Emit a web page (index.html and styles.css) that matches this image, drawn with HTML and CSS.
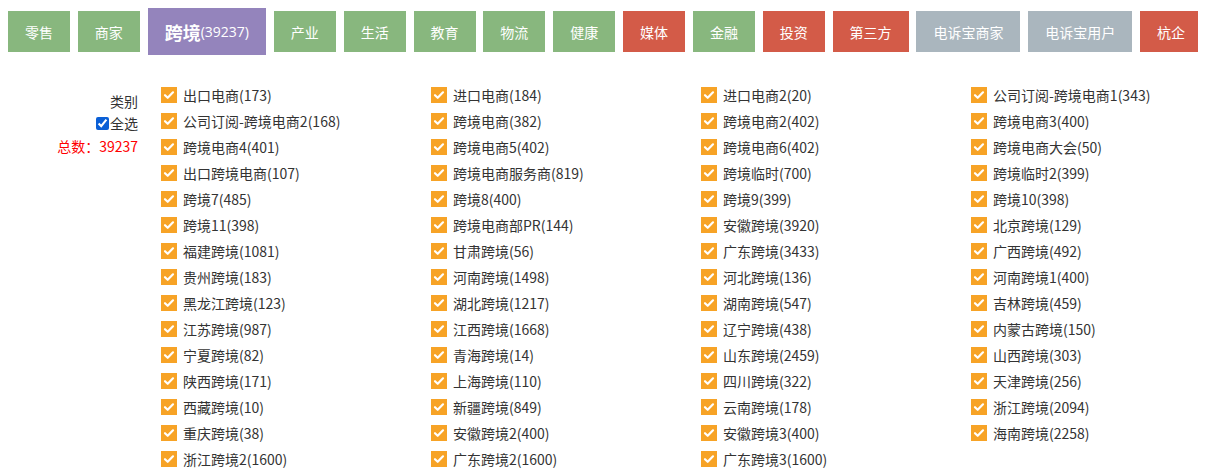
FILE: index.html
```html
<!DOCTYPE html>
<html lang="zh-CN">
<head>
    <meta charset="UTF-8">
    <meta name="viewport" content="width=device-width, initial-scale=1.0">
    <title>跨境 - 类别</title>
    <link rel="stylesheet" href="styles.css">
</head>
<body>
    <nav class="tabs">
        <a class="tab green" href="#">零售</a>
        <a class="tab green" href="#">商家</a>
        <a class="tab active" href="#"><b>跨境</b><span class="count">(39237)</span></a>
        <a class="tab green" href="#">产业</a>
        <a class="tab green" href="#">生活</a>
        <a class="tab green" href="#">教育</a>
        <a class="tab green" href="#">物流</a>
        <a class="tab green" href="#">健康</a>
        <a class="tab red" href="#">媒体</a>
        <a class="tab green" href="#">金融</a>
        <a class="tab red" href="#">投资</a>
        <a class="tab red" href="#">第三方</a>
        <a class="tab gray" href="#">电诉宝商家</a>
        <a class="tab gray" href="#">电诉宝用户</a>
        <a class="tab red" href="#">杭企</a>
    </nav>

    <section class="category">
        <div class="side">
            <div>类别</div>
            <label class="select-all"><input type="checkbox" checked>全选</label>
            <div class="total">总数：39237</div>
        </div>

        <div class="cat-list" id="catList"></div>
    </section>

    <script>
        const cats = [
            "出口电商(173)", "进口电商(184)", "进口电商2(20)", "公司订阅-跨境电商1(343)",
            "公司订阅-跨境电商2(168)", "跨境电商(382)", "跨境电商2(402)", "跨境电商3(400)",
            "跨境电商4(401)", "跨境电商5(402)", "跨境电商6(402)", "跨境电商大会(50)",
            "出口跨境电商(107)", "跨境电商服务商(819)", "跨境临时(700)", "跨境临时2(399)",
            "跨境7(485)", "跨境8(400)", "跨境9(399)", "跨境10(398)",
            "跨境11(398)", "跨境电商部PR(144)", "安徽跨境(3920)", "北京跨境(129)",
            "福建跨境(1081)", "甘肃跨境(56)", "广东跨境(3433)", "广西跨境(492)",
            "贵州跨境(183)", "河南跨境(1498)", "河北跨境(136)", "河南跨境1(400)",
            "黑龙江跨境(123)", "湖北跨境(1217)", "湖南跨境(547)", "吉林跨境(459)",
            "江苏跨境(987)", "江西跨境(1668)", "辽宁跨境(438)", "内蒙古跨境(150)",
            "宁夏跨境(82)", "青海跨境(14)", "山东跨境(2459)", "山西跨境(303)",
            "陕西跨境(171)", "上海跨境(110)", "四川跨境(322)", "天津跨境(256)",
            "西藏跨境(10)", "新疆跨境(849)", "云南跨境(178)", "浙江跨境(2094)",
            "重庆跨境(38)", "安徽跨境2(400)", "安徽跨境3(400)", "海南跨境(2258)",
            "浙江跨境2(1600)", "广东跨境2(1600)", "广东跨境3(1600)"
        ];

        const catList = document.getElementById("catList");
        const tick = '<svg viewBox="0 0 16 16" width="16" height="16"><path d="M4 8.2l2.7 2.6L12 5.3" fill="none" stroke="#fff" stroke-width="2.2" stroke-linecap="round" stroke-linejoin="round"/></svg>';

        cats.forEach(name => {
            const item = document.createElement("label");
            item.className = "cat-item";
            item.innerHTML = `<input type="checkbox" checked><span class="box">${tick}</span>${name}`;
            catList.appendChild(item);
        });
    </script>
</body>
</html>
```

FILE: styles.css
```css
* {
    box-sizing: border-box;
}

body {
    margin: 8px;
    font-family: "Noto Sans CJK SC", "Open Sans", sans-serif;
    font-size: 14px;
    color: #333;
    overflow: hidden;
}

.tabs {
    display: flex;
    align-items: center;
    gap: 7.85px;
    height: 47px;
}

.tab {
    display: flex;
    align-items: center;
    justify-content: center;
    height: 41px;
    padding: 0 17px;
    color: #fff;
    text-decoration: none;
    font-size: 14px;
    white-space: nowrap;
}

.tab.green {
    background: #88b77e;
}

.tab.red {
    background: #d35b48;
}

.tab.gray {
    background: #aab6be;
}

.tab.active {
    height: 47px;
    background: #9484bc;
}

.tab.active b {
    font-size: 18px;
}

.tab.active .count {
    font-family: "Open Sans", "Noto Sans CJK SC", sans-serif;
}

.category {
    display: flex;
    gap: 23px;
    margin-top: 27px;
}

.side {
    width: 130px;
    flex: none;
    padding-top: 8px;
    text-align: right;
    line-height: 22px;
}

.select-all {
    display: inline-flex;
    align-items: center;
}

.select-all input {
    width: 13px;
    height: 13px;
    margin: 0 1px 0 0;
    accent-color: #0a5fd6;
}

.total {
    color: #f00;
}

.cat-list {
    flex: 1;
    display: grid;
    grid-template-columns: 270px 270px 270px 1fr;
}

.cat-item {
    display: flex;
    align-items: center;
    height: 26px;
    white-space: nowrap;
}

.cat-item input {
    display: none;
}

.cat-item .box {
    display: flex;
    width: 16px;
    height: 16px;
    margin-right: 6px;
    background: #f7a326;
}
```
